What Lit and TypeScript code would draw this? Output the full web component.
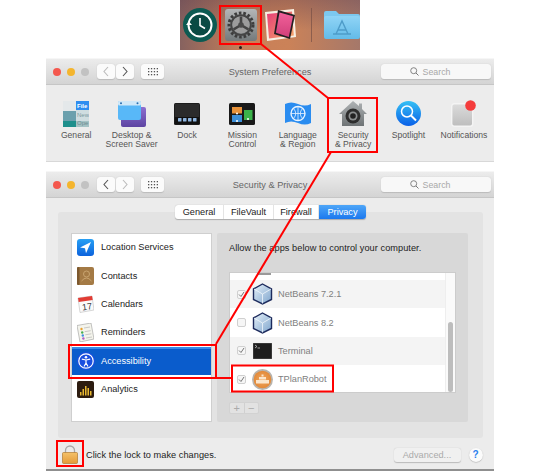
import { LitElement, html, css } from "lit";
import { customElement } from "lit/decorators.js";

const gear = html`<svg viewBox="0 0 32 32" width="32" height="32">
  <defs><linearGradient id="gb" x1="0" y1="0" x2="0" y2="1"><stop offset="0" stop-color="#b4b6b7"/><stop offset="1" stop-color="#747a7c"/></linearGradient></defs>
  <rect width="32" height="32" rx="3" fill="url(#gb)"/>
  <circle cx="16" cy="16" r="12" fill="none" stroke="#3d3d3d" stroke-width="3" stroke-dasharray="2.600 1.900"/>
  <circle cx="16" cy="16" r="9.800" fill="none" stroke="#444" stroke-width="2"/>
  <circle cx="16" cy="16" r="8.400" fill="#9c9c9c"/>
  <path d="M16 16 16 7.500M16 16 8.600 20.300M16 16 23.400 20.300" stroke="#444" stroke-width="2.600" fill="none"/>
  <circle cx="16" cy="16" r="2.800" fill="#4a4a4a"/>
</svg>`;

const timeMachine = html`<svg viewBox="0 0 34 34" width="34" height="34">
  <circle cx="17" cy="17" r="17" fill="#0c5a52"/>
  <circle cx="17" cy="17" r="11.500" fill="#0a4a44" stroke="#fff" stroke-width="2"/>
  <path d="M17 10v7.500l5 3" stroke="#fff" stroke-width="1.600" fill="none"/>
  <path d="M3 17l3-3.500L9 17z" fill="#fff"/>
</svg>`;

const photos = html`<svg viewBox="0 0 32 34" width="32" height="34">
  <defs><linearGradient id="ph" x1="0" y1="0" x2="1" y2="1"><stop offset="0" stop-color="#e83c78"/><stop offset="1" stop-color="#f4a868"/></linearGradient>
  <linearGradient id="ph2" x1="0" y1="0" x2="0" y2="1"><stop offset="0" stop-color="#f2609a"/><stop offset="1" stop-color="#d0407a"/></linearGradient></defs>
  <path d="M0 4 29 1l2 28-29 4z" fill="#f8efe2"/>
  <path d="M2 6 27 3.500l1.800 24L4 30.500z" fill="url(#ph)"/>
  <path d="M13 2 30 7 25 31 9 26z" fill="#231f22"/>
  <path d="M14.500 4.500 28 8.300 23.800 29 10.900 24.800z" fill="url(#ph2)"/>
</svg>`;

const folder = html`<svg viewBox="0 0 38 30" width="38" height="30">
  <defs><linearGradient id="fo" x1="0" y1="0" x2="0" y2="1"><stop offset="0" stop-color="#90d4f6"/><stop offset="1" stop-color="#63bbe8"/></linearGradient></defs>
  <path d="M1 3q0-2 2-2h10l3 3h19q2 0 2 2v3H1z" fill="#7cc8ef"/>
  <rect x="1" y="6" width="36" height="23" rx="2" fill="url(#fo)"/>
  <path d="M13 24 19 11l6 13M15 20h8M10 24h18" stroke="#4e9cc9" stroke-width="1.400" fill="none"/>
</svg>`;

const general = html`<svg viewBox="0 0 26 26" width="26" height="26">
  <rect x="0" y="0" width="26" height="26" rx="2.500" fill="#cfdde0"/>
  <rect x="0" y="0" width="13" height="10" fill="#e4e8ea"/>
  <rect x="13" y="0" width="13" height="9" fill="#2e8df0"/>
  <rect x="0" y="10" width="13" height="16" fill="#6ba0ad"/>
  <rect x="0" y="20" width="13" height="6" fill="#1e8f8c"/>
  <rect x="13" y="20" width="13" height="6" fill="#a4c2c4"/>
  <text x="14" y="7" font-size="6" font-family="Liberation Sans" font-weight="700" fill="#fff">File</text>
  <text x="14" y="16" font-size="6" font-family="Liberation Sans" fill="#7c9a9e">New</text>
  <text x="14" y="24" font-size="6" font-family="Liberation Sans" fill="#6c8c90">Ope</text>
</svg>`;

const desktop = html`<svg viewBox="0 0 28 26" width="28" height="26">
  <defs><linearGradient id="d1" x1="0" y1="0" x2="0" y2="1"><stop offset="0" stop-color="#8d6fd0"/><stop offset="1" stop-color="#5d44a2"/></linearGradient></defs>
  <rect x="3" y="6" width="25" height="20" rx="2" fill="url(#d1)"/>
  <rect x="0" y="0" width="23" height="19" rx="2" fill="#58b8f8"/>
  <rect x="0" y="0" width="23" height="4.500" rx="1.500" fill="#d0e8f8"/>
  <circle cx="3" cy="2.300" r="1" fill="#2a6fb0"/><circle cx="19.500" cy="2.300" r="1" fill="#2a6fb0"/>
</svg>`;

const dock = html`<svg viewBox="0 0 26 22" width="26" height="22">
  <rect width="26" height="22" rx="1.500" fill="#1c1c1c"/>
  <rect x="1" y="1" width="24" height="20" fill="#2b2b2b"/>
  <rect x="1" y="14" width="24" height="7" fill="#111"/>
  <g fill="#8fb6e0"><rect x="4" y="15" width="3.500" height="3.500" rx=".5"/><rect x="9" y="15" width="3.500" height="3.500" rx=".5"/><rect x="14" y="15" width="3.500" height="3.500" rx=".5"/><rect x="19" y="15" width="3.500" height="3.500" rx=".5"/></g>
</svg>`;

const mission = html`<svg viewBox="0 0 26 22" width="26" height="22">
  <rect width="26" height="22" rx="1.500" fill="#191919"/>
  <rect x="3" y="4" width="10" height="6.500" fill="#e8923a"/>
  <rect x="3" y="12" width="10" height="7" fill="#3c8fd8"/>
  <rect x="15" y="7" width="8.500" height="10" fill="#3bb34a"/>
  <circle cx="8" cy="10.500" r="1" fill="#fff"/><circle cx="8" cy="18" r="1" fill="#fff"/><circle cx="19" cy="16" r="1" fill="#fff"/>
</svg>`;

const language = html`<svg viewBox="0 0 28 26" width="28" height="26">
  <path d="M1 3q6-3 13 0t13 0v19q-6 3-13 0T1 22z" fill="#2a8cf0"/>
  <circle cx="14" cy="12.500" r="7" fill="none" stroke="#e8f3ff" stroke-width="1.400"/>
  <path d="M14 5.500v14M7 12.500h14M9.500 7.500q4.500 5 0 10M18.500 7.500q-4.500 5 0 10" stroke="#e8f3ff" stroke-width=".8" fill="none"/>
</svg>`;

const security = html`<svg viewBox="0 0 28 26" width="28" height="26">
  <defs><linearGradient id="sh" x1="0" y1="0" x2="0" y2="1"><stop offset="0" stop-color="#aeb2b4"/><stop offset="1" stop-color="#6f7476"/></linearGradient></defs>
  <path d="M14 0 20 5V2.500h3V8l5 5h-3v12H3V13H0z" fill="url(#sh)"/>
  <circle cx="14" cy="15" r="7.500" fill="#2d2d2d"/>
  <circle cx="14" cy="15" r="4.500" fill="#8c8f90"/>
  <circle cx="14" cy="15" r="2.800" fill="#222"/>
</svg>`;

const spotlight = html`<svg viewBox="0 0 25 25" width="25" height="25">
  <defs><linearGradient id="sp" x1="0" y1="0" x2="0" y2="1"><stop offset="0" stop-color="#35c0f4"/><stop offset="1" stop-color="#0a60e8"/></linearGradient></defs>
  <circle cx="12.500" cy="12.500" r="12.500" fill="url(#sp)"/>
  <circle cx="11" cy="10.500" r="5.500" fill="none" stroke="#fff" stroke-width="1.500"/>
  <path d="M15 14.500l5 5" stroke="#fff" stroke-width="2"/>
</svg>`;

const notifications = html`<svg viewBox="0 0 26 27" width="26" height="27">
  <defs><linearGradient id="no" x1="0" y1="0" x2="0" y2="1"><stop offset="0" stop-color="#dcdcdc"/><stop offset="1" stop-color="#bdbdbd"/></linearGradient></defs>
  <rect x="0.700" y="3.700" width="21" height="22.500" rx="2.500" fill="url(#no)" stroke="#f4f4f4" stroke-width="1.400"/>
  <circle cx="19.500" cy="5.500" r="5.300" fill="#f43c3c"/>
</svg>`;

const locationIcon = html`<svg viewBox="0 0 17 17" width="17" height="17">
  <defs><linearGradient id="lo" x1="0" y1="0" x2="0" y2="1"><stop offset="0" stop-color="#28a0f4"/><stop offset="1" stop-color="#0c62dc"/></linearGradient></defs>
  <rect width="17" height="17" rx="3" fill="url(#lo)"/>
  <path d="M14 3 3 8.500l5 .8 1 5z" fill="#fff"/>
</svg>`;

const contacts = html`<svg viewBox="0 0 17 18" width="17" height="18">
  <rect x="0" y="0" width="17" height="18" rx="2" fill="#a47a45"/>
  <rect x="0" y="0" width="2.500" height="18" rx="1" fill="#7c582e"/>
  <circle cx="9.500" cy="7" r="3" fill="none" stroke="#c9a470" stroke-width="1"/>
  <path d="M4.500 14q5-6 10 0" fill="none" stroke="#c9a470" stroke-width="1"/>
</svg>`;

const calendar = html`<svg viewBox="0 0 17 18" width="17" height="18">
  <path d="M1 3 15 1l2 14-14 2.500z" fill="#fafafa" stroke="#b0b0b0" stroke-width=".5"/>
  <path d="M1 3 15 1l.7 4L1.700 7z" fill="#e23c34"/>
  <text x="5" y="15" font-size="9" font-family="Liberation Sans" fill="#333" transform="rotate(-8 8 12)">17</text>
</svg>`;

const reminders = html`<svg viewBox="0 0 17 19" width="17" height="19">
  <path d="M0 2.500 14 0l3 16-14 3z" fill="#f4f4ec" stroke="#9a9a9a" stroke-width=".6"/>
  <circle cx="4.500" cy="6" r="1.200" fill="#e8a030"/><circle cx="5.200" cy="9.500" r="1.200" fill="#48b050"/>
  <circle cx="5.800" cy="12.500" r="1.200" fill="#4090e0"/><circle cx="6.400" cy="15.500" r="1.200" fill="#b060c8"/>
  <path d="M7 5l6-1M7.700 8.700l6-1M8.300 11.800l6-1M9 15l6-1" stroke="#aaa" stroke-width=".6"/>
</svg>`;

const accessibility = html`<svg viewBox="0 0 18 18" width="18" height="18">
  <circle cx="9" cy="9" r="9" fill="#1a4fe0"/>
  <circle cx="9" cy="9" r="7.200" fill="none" stroke="#fff" stroke-width="1.200"/>
  <circle cx="9" cy="5.200" r="1.300" fill="#fff"/>
  <path d="M4.800 7.200 9 8l4.200-.8M9 8v3l-2 3.500M9 11l2 3.500" fill="none" stroke="#fff" stroke-width="1.200"/>
</svg>`;

const analytics = html`<svg viewBox="0 0 17 17" width="17" height="17">
  <rect width="17" height="17" rx="2" fill="#2c1c10"/>
  <g fill="#e8b830"><rect x="3" y="11" width="1.500" height="3.500"/><rect x="5.500" y="8" width="1.500" height="6.500"/><rect x="8" y="5" width="1.500" height="9.500"/><rect x="10.500" y="7" width="1.500" height="7.500"/><rect x="13" y="10" width="1.500" height="4.500"/></g>
</svg>`;

const netbeans = html`<svg viewBox="0 0 21 22" width="21" height="22">
  <defs><linearGradient id="nb" x1="0" y1="0" x2="1" y2="1"><stop offset="0" stop-color="#e8f2fa"/><stop offset="1" stop-color="#7da4cc"/></linearGradient></defs>
  <path d="M10.500 1 19.500 6v10.500L10.500 21 1.500 16.500V6z" fill="url(#nb)" stroke="#1c2a5c" stroke-width="1.400"/>
  <path d="M2 6l8.500 5 8.500-5M10.500 11v9.500" stroke="#f0f6fb" stroke-width=".8" fill="none"/>
</svg>`;

const terminal = html`<svg viewBox="0 0 19 16" width="19" height="16">
  <rect width="19" height="16" fill="#1e1e1e" stroke="#777" stroke-width=".6"/>
  <path d="M2 2l2 1.500L2 5" stroke="#ddd" stroke-width=".7" fill="none"/><path d="M4.500 5h2.500" stroke="#ddd" stroke-width=".7"/>
</svg>`;

const tplan = html`<svg viewBox="0 0 21 21" width="21" height="21">
  <defs><radialGradient id="tp"><stop offset="0" stop-color="#f0a860"/><stop offset=".9" stop-color="#e48c3c"/></radialGradient></defs>
  <circle cx="10.500" cy="10.500" r="10.500" fill="#b8b4ae"/>
  <circle cx="10.500" cy="10.500" r="8.800" fill="url(#tp)"/>
  <g fill="#fbe6cc"><rect x="4" y="11" width="13" height="3.500"/><rect x="7" y="8" width="7" height="2.500"/><rect x="9.500" y="5.500" width="2" height="2"/></g>
</svg>`;

const lock = html`<svg viewBox="0 0 16 19" width="16" height="19">
  <defs><linearGradient id="lk" x1="0" y1="0" x2="0" y2="1"><stop offset="0" stop-color="#f4c26a"/><stop offset="1" stop-color="#e49a38"/></linearGradient></defs>
  <path d="M3.500 8V5.500a4.500 4.500 0 0 1 9 0V8" fill="none" stroke="#a8a8a8" stroke-width="1.300"/>
  <rect x="0.500" y="7.500" width="15" height="11" rx="1" fill="url(#lk)" stroke="#b07a30" stroke-width=".7"/>
</svg>`;

@customElement("mac-titlebar")
class MacTitlebar extends LitElement {
  static properties = { label: {}, back: { type: Boolean } };
  declare label: string;
  declare back: boolean;
  static styles = css`
    :host { display: flex; align-items: center; height: 27px; box-sizing: border-box; padding: 0 3px 0 7px;
      background: linear-gradient(#ececec, #d4d4d4); border-top: 1px solid #f6f6f6; border-bottom: 1px solid #c6c6c6; position: relative; }
    .lights { display: flex; gap: 6px; }
    .light { width: 8px; height: 8px; border-radius: 50%; }
    .r { background: #f4584e; } .y { background: #f4b52e; } .g { background: #c2c2c2; }
    .nav { display: flex; margin-left: 8px; gap: 1px; }
    .btn { height: 15px; background: #fbfbfb; border-radius: 3px; box-shadow: 0 .5px 1px #bbb; display: flex; align-items: center; justify-content: center; }
    .nav .btn { width: 18px; }
    .grid { width: 23px; margin-left: 7px; }
    .title { position: absolute; left: 0; right: 0; text-align: center; font: 9.200px "Liberation Sans", sans-serif; color: #666; pointer-events: none; }
    .search { margin-left: auto; width: 110px; height: 15px; box-sizing: border-box; padding-right: 12px; background: #f8f8f8; border-radius: 3px; box-shadow: 0 .5px 1px #bbb;
      display: flex; align-items: center; justify-content: center; gap: 4px; font: 8.800px "Liberation Sans", sans-serif; color: #a8a8a8; position: relative; z-index: 1; }
  `;
  render() {
    const chev = (d: string, c: string) => html`<svg width="8" height="11" viewBox="0 0 8 11"><path d=${d} fill="none" stroke=${c} stroke-width="1.100"/></svg>`;
    return html`
      <div class="lights"><span class="light r"></span><span class="light y"></span><span class="light g"></span></div>
      <div class="nav">
        <div class="btn">${chev("M6 1 2 5.500 6 10", this.back ? "#555" : "#bbb")}</div>
        <div class="btn">${chev("M2 1 6 5.500 2 10", this.back ? "#bbb" : "#555")}</div>
      </div>
      <div class="btn grid"><svg width="10" height="8" viewBox="0 0 10 8"><g fill="#555"><rect x="0" y="0" width="1.300" height="1.300"/><rect x="2.900" y="0" width="1.300" height="1.300"/><rect x="5.800" y="0" width="1.300" height="1.300"/><rect x="8.700" y="0" width="1.300" height="1.300"/><rect x="0" y="3" width="1.300" height="1.300"/><rect x="2.900" y="3" width="1.300" height="1.300"/><rect x="5.800" y="3" width="1.300" height="1.300"/><rect x="8.700" y="3" width="1.300" height="1.300"/><rect x="0" y="6" width="1.300" height="1.300"/><rect x="2.900" y="6" width="1.300" height="1.300"/><rect x="5.800" y="6" width="1.300" height="1.300"/><rect x="8.700" y="6" width="1.300" height="1.300"/></g></svg></div>
      <div class="title">${this.label}</div>
      <div class="search"><svg width="9" height="9" viewBox="0 0 9 9"><circle cx="3.700" cy="3.700" r="3" fill="none" stroke="#777" stroke-width=".9"/><path d="M6 6l2.500 2.500" stroke="#777" stroke-width="1"/></svg>Search</div>
    `;
  }
}

@customElement("app-root")
class AppRoot extends LitElement {
  static styles = css`
    :host { display: block; position: relative; width: 540px; height: 473px; background: #fff; overflow: hidden;
      font-family: "Liberation Sans", sans-serif; }
    .dockbar { width: 180px; height: 50px; margin-left: 180px; box-sizing: border-box; padding: 0 3px;
      background: linear-gradient(180deg, rgba(90,60,80,.35), rgba(90,60,80,0) 60%), linear-gradient(90deg, #86625f, #c87f58 35%, #cb8258 60%, #a5786a);
      display: flex; align-items: center; position: relative; }
    .dockbar svg { display: block; flex: none; }
    .d2 { margin-left: 8px; } .d3 { margin-left: 8px; }
    .sep { width: 1px; height: 34px; background: rgba(120,80,70,.7); margin: 0 11px 0 14px; flex: none; }
    .dot { position: absolute; left: 59px; top: 46px; width: 3px; height: 3px; border-radius: 50%; background: #2a1a1a; }
    .win { width: 448px; margin-left: 46px; background: #ececec; }
    .w1 { margin-top: 8px; height: 104px; border-bottom: 1px solid #d8d8d8; box-sizing: border-box; }
    .w2 { margin-top: 9px; height: 300px; box-sizing: border-box; border-bottom: 2px solid #8f8f8f; display: flex; flex-direction: column; }
    .prefs { display: grid; grid-template-columns: repeat(8, 55.400px); padding: 15px 0 0 2.500px; }
    .pref { display: flex; flex-direction: column; align-items: center; }
    .pic { height: 27px; display: flex; align-items: center; justify-content: center; margin-bottom: 3.500px; }
    .name { font-size: 8.600px; line-height: 9.300px; text-align: center; color: #555; white-space: nowrap; }
    .panel { position: relative; margin: 14px 11px 0 12px; height: 226px; background: #e3e3e3; border-radius: 3px; box-sizing: border-box; padding: 21px 15px 16px 13px; display: flex; gap: 5px; }
    .tabs { position: absolute; top: -7px; left: 117px; height: 14px; display: flex; background: #fff; border-radius: 3px; box-shadow: 0 .5px 1px #aaa; font-size: 9.200px; color: #222; line-height: 14px; }
    .tab { text-align: center; border-right: 1px solid #e4e4e4; box-sizing: border-box; }
    .t1 { width: 49px; } .t2 { width: 50px; } .t3 { width: 45px; }
    .t4 { width: 47px; border: 0; color: #fff; background: linear-gradient(#4ea6f8, #1b78ee); border-radius: 0 3px 3px 0; }
    .side { width: 141px; box-sizing: border-box; background: #fff; outline: 1px solid #cfcfcf; outline-offset: -1px; flex: none; }
    .row { height: 28.400px; display: flex; align-items: center; gap: 6px; padding-left: 5px; font-size: 9.200px; color: #222; box-sizing: border-box; }
    .row .ic { width: 19px; display: flex; justify-content: center; flex: none; }
    .row.sel { background: linear-gradient(#3a8ae8 0 1.500px, #0a5ccc 1.500px); color: #fff; }
    .right { flex: 1; background: #d8d8d8; border-radius: 2px; padding: 10px 12px 0; box-sizing: border-box; }
    .allow { font-size: 9.200px; color: #222; line-height: 10px; letter-spacing: .05px; }
    .apps { position: relative; margin-top: 19px; height: 121px; background: #fff; border: 1px solid #cccccc; box-sizing: border-box; overflow: hidden; }
    .stub { height: 7px; }
    .stub i { display: block; width: 14px; height: 2px; margin-left: 27px; background: #9a9a9a; }
    .app { height: 28.400px; display: flex; align-items: center; padding-left: 7px; font-size: 9.200px; color: #808080; box-sizing: border-box; }
    .app.odd { background: #f4f4f4; }
    .cb { width: 9px; height: 9px; box-sizing: border-box; background: #f6f6f6; border: 1px solid #d0d0d0; border-radius: 2px; margin-right: 5px; flex: none; display: flex; align-items: center; justify-content: center; }
    .cb svg { display: block; }
    .appic { width: 22px; display: flex; justify-content: center; margin-right: 5px; flex: none; }
    .track { position: absolute; right: 0; top: 0; bottom: 0; width: 9px; background: #fafafa; border-left: 1px solid #eee; }
    .thumb { position: absolute; top: 49px; left: 2px; width: 5px; height: 70px; border-radius: 3px; background: #bdbdbd; }
    .pm { display: flex; width: 30px; height: 12px; margin-top: 9px; background: #e2e2e2; border-radius: 2px; border: 1px solid #d2d2d2; box-sizing: border-box; color: #aaa; font-size: 11px; line-height: 10px; }
    .pm span { flex: 1; text-align: center; }
    .pm span + span { border-left: 1px solid #d0d0d0; }
    .foot { display: flex; align-items: center; padding: 7px 0 0 16px; }
    .foot > svg { display: block; flex: none; }
    .foot .note { font-size: 9.200px; color: #222; margin-left: 8px; letter-spacing: .04px; }
    .adv { margin-left: auto; width: 67px; height: 14px; border-radius: 3px; background: #f0f0f0; box-shadow: 0 .5px 1px #bbb; color: #aaa; font-size: 9.200px; line-height: 14px; text-align: center; }
    .help { width: 14px; height: 14px; border-radius: 50%; background: #fbfbfb; box-shadow: 0 .5px 1px #aaa; color: #2a80ee; font-size: 10px; font-weight: 700; line-height: 14px; text-align: center; margin: 0 11.500px 0 8px; }
    .marks { position: absolute; left: 0; top: 0; pointer-events: none; }
  `;
  render() {
    const prefs: [unknown, string[]][] = [
      [general, ["General"]], [desktop, ["Desktop &", "Screen Saver"]], [dock, ["Dock"]], [mission, ["Mission", "Control"]],
      [language, ["Language", "& Region"]], [security, ["Security", "& Privacy"]], [spotlight, ["Spotlight"]], [notifications, ["Notifications"]],
    ];
    const side: [unknown, string][] = [
      [locationIcon, "Location Services"], [contacts, "Contacts"], [calendar, "Calendars"], [reminders, "Reminders"], [accessibility, "Accessibility"], [analytics, "Analytics"],
    ];
    const apps: [unknown, string, boolean][] = [
      [netbeans, "NetBeans 7.2.1", true], [netbeans, "NetBeans 8.2", false], [terminal, "Terminal", true], [tplan, "TPlanRobot", true],
    ];
    const tick = html`<svg width="7" height="7" viewBox="0 0 7 7"><path d="M1 3.500 3 5.500 6 1" fill="none" stroke="#777" stroke-width="1"/></svg>`;
    return html`
      <div class="dockbar">
        <span class="d1">${timeMachine}</span>
        <span class="d2">${gear}</span>
        <span class="d3">${photos}</span>
        <div class="sep"></div>
        ${folder}
        <div class="dot"></div>
      </div>
      <div class="win w1">
        <mac-titlebar label="System Preferences"></mac-titlebar>
        <div class="prefs">
          ${prefs.map(([ic, lines]) => html`<div class="pref"><div class="pic">${ic}</div><div class="name">${lines.map((l) => html`${l}<br />`)}</div></div>`)}
        </div>
      </div>
      <div class="win w2">
        <mac-titlebar label="Security & Privacy" back></mac-titlebar>
        <div class="panel">
          <div class="tabs"><div class="tab t1">General</div><div class="tab t2">FileVault</div><div class="tab t3">Firewall</div><div class="tab t4">Privacy</div></div>
          <div class="side">
            ${side.map(([ic, t]) => html`<div class="row ${t === "Accessibility" ? "sel" : ""}"><span class="ic">${ic}</span>${t}</div>`)}
          </div>
          <div class="right">
            <div class="allow">Allow the apps below to control your computer.</div>
            <div class="apps">
              <div class="stub"><i></i></div>
              ${apps.map(([ic, t, on], i) => html`<div class="app ${i % 2 === 0 ? "odd" : ""}"><span class="cb">${on ? tick : ""}</span><span class="appic">${ic}</span>${t}</div>`)}
              <div class="track"><div class="thumb"></div></div>
            </div>
            <div class="pm"><span>+</span><span>−</span></div>
          </div>
        </div>
        <div class="foot">
          ${lock}
          <span class="note">Click the lock to make changes.</span>
          <div class="adv">Advanced...</div>
          <div class="help">?</div>
        </div>
      </div>
      <svg class="marks" width="540" height="473" viewBox="0 0 540 473" fill="none" stroke="#f00" stroke-width="2">
        <rect x="220" y="6" width="41" height="38"/>
        <path d="M261 44 328 98"/>
        <rect x="328" y="98" width="49" height="54"/>
        <path d="M331 152 216 344"/>
        <rect x="69" y="345" width="147" height="33"/>
        <path d="M216 378H232"/>
        <rect x="232" y="365.500" width="101" height="26"/>
        <rect x="57" y="441" width="26" height="25"/>
      </svg>
    `;
  }
}
